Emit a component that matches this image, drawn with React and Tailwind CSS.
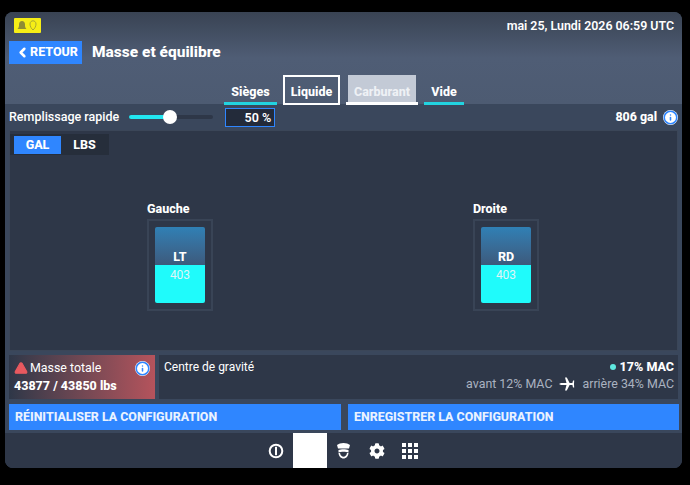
// Mass and balance panel of an aircraft tablet.
import { useState } from "react";
import { ChevronLeft, Info, TriangleAlert } from "lucide-react";
import { FaCog } from "react-icons/fa";

const TABS = [
  { label: "Sièges", box: "w-[53px] border-b-[3px] border-[#22d3e0] pt-[8px] text-white" },
  { label: "Liquide", box: "w-[57px] border-2 border-white pt-[4px] text-white" },
  { label: "Carburant", box: "w-[72px] border-b-[3px] border-white bg-[linear-gradient(to_right,transparent_2px,#c3cad6_2px,#c3cad6_70px,transparent_70px)] pt-[8px] text-[#eef1f5]" },
  { label: "Vide", box: "w-[40px] border-b-[3px] border-[#22d3e0] pt-[8px] text-white" },
];

function InfoDot({ className }) {
  return (
    <span className={`grid h-[15px] w-[15px] place-items-center rounded-full bg-white text-[#2f86ff] ${className || ""}`}>
      <Info size={15} strokeWidth={2.5} />
    </span>
  );
}

function Tank({ title, code }) {
  return (
    <div className="w-[66px]">
      <div className="mb-[2px] text-[12.5px] leading-[16px] font-extrabold text-white">{title}</div>
      <div className="h-[92px] border-2 border-[#394456] p-[6px]">
        <div className="flex h-[76px] flex-col overflow-hidden rounded-[2px] text-center">
          <div className="flex h-[38px] items-end justify-center bg-gradient-to-b from-[#2f80b5] to-[#3c5a7c] text-[12.5px] leading-[17px] font-extrabold text-white">{code}</div>
          <div className="h-[38px] bg-[#1ffbfb] text-[12px] leading-[20px] text-[#dff6f8]">403</div>
        </div>
      </div>
    </div>
  );
}

function BadgeIcons() {
  return (
    <svg width="21" height="11" viewBox="0 0 21 11">
      <path d="M0.5 9 C2 7.5 2 6 2 4.5 C2 2.5 3.2 1 5 1 C6.8 1 8 2.5 8 4.5 C8 6 8 7.5 9.5 9 Z" fill="#8f8d34" />
      <path d="M16 0.8 C17.5 0.8 19 2 19 4 C19 6.5 17.5 8.8 16 10 C14.5 8.8 13 6.5 13 4 C13 2 14.5 0.8 16 0.8 Z" fill="none" stroke="#a9a832" strokeWidth="1" />
    </svg>
  );
}

function Plane() {
  return (
    <svg width="16" height="14" viewBox="0 0 16 14" fill="white">
      <path d="M0 7 L2 6 L7.5 6 L6 0.5 L7.8 0.5 L10.6 6 L13.4 6 L14 3.5 L15.2 3.5 L15 7 L15.2 10.5 L14 10.5 L13.4 8 L10.6 8 L7.8 13.5 L6 13.5 L7.5 8 L2 8 Z" />
    </svg>
  );
}

function AlertCircle() {
  return (
    <svg width="16" height="16" viewBox="0 0 16 16">
      <circle cx="8" cy="8" r="6.3" fill="none" stroke="white" strokeWidth="2" />
      <rect x="7" y="3.8" width="2" height="8.4" fill="white" />
    </svg>
  );
}

function PilotHat() {
  return (
    <svg width="15" height="17" viewBox="0 0 15 17" fill="white">
      <path d="M1 3 C4 0.3 11 0.3 14 3 L13 6.5 L2 6.5 Z" />
      <path d="M2.5 8 C5 7 10 7 12.5 8 L12.5 10.5 C10 9.5 5 9.5 2.5 10.5 Z" />
      <path d="M2.5 11 L4 11 C4.5 13.5 6 14.8 7.5 14.8 C9 14.8 10.5 13.5 11 11 L12.5 11 C12.2 14.3 10 16.5 7.5 16.5 C5 16.5 2.8 14.3 2.5 11 Z" />
    </svg>
  );
}

function AppGrid() {
  const dots = [0, 1, 2, 3, 4, 5, 6, 7, 8];
  return (
    <div className="grid grid-cols-3 gap-[2px]">
      {dots.map((d) => (
        <span key={d} className="h-[4px] w-[4px] bg-white" />
      ))}
    </div>
  );
}

export default function App() {
  const [unit, setUnit] = useState("GAL");

  return (
    <div className="h-[485px] w-[690px] overflow-hidden bg-black pt-[12px] pl-[5px] font-['Roboto',sans-serif]">
      <div className="flex h-[456px] w-[677px] flex-col overflow-hidden rounded-[8px] bg-[#3a475c]">
        <div className="h-[92px] bg-gradient-to-b from-[#394353] via-[#4f5d75] to-[#4d5b72]">
          <div className="flex h-[21px] items-end justify-between pr-[8px] pl-[9px]">
            <div className="flex h-[15px] w-[27px] items-center justify-center rounded-[1px] bg-[#f6ee16]">
              <BadgeIcons />
            </div>
            <span className="text-[12.4px] leading-[15px] font-semibold text-white">mai 25, Lundi 2026 06:59 UTC</span>
          </div>
          <div className="mt-[8px] flex items-center pl-[4px]">
            <button type="button" className="flex h-[23px] w-[73px] items-center justify-center bg-[#2f86ff] pl-[2px] text-[12.5px] font-extrabold text-white">
              <ChevronLeft size={15} strokeWidth={4} />
              RETOUR
            </button>
            <h1 className="ml-[10px] text-[15.5px] font-extrabold text-white">Masse et équilibre</h1>
          </div>
          <div className="mt-[11px] ml-[219px] flex h-[30px] items-end gap-[6px]">
            {TABS.map((t) => (
              <div key={t.label} className={`grid h-[30px] place-items-center text-[12.5px] font-extrabold ${t.box}`}>{t.label}</div>
            ))}
          </div>
        </div>

        <div className="flex h-[26px] items-center pr-[4px] pl-[4px]">
          <span className="text-[12.5px] font-medium text-white">Remplissage rapide</span>
          <div className="relative ml-[10px] h-[4px] w-[84px] rounded-full bg-[#2e3748]">
            <div className="h-full w-[41px] rounded-full bg-[#22e6f0]" />
            <div className="absolute top-[-5px] left-[34px] h-[14px] w-[14px] rounded-full bg-white" />
          </div>
          <div className="ml-[12px] h-[19px] w-[50px] border border-[#2f86ff] bg-[#232b3a] pr-[3px] text-right text-[12.5px] leading-[17px] font-semibold text-white">50 %</div>
          <span className="ml-auto text-[12.4px] font-extrabold text-white">806 gal</span>
          <InfoDot className="ml-[6px]" />
        </div>

        <div className="mx-[4px] h-[221px] border border-[#3b4658] bg-[#2e3748] pt-[3px]">
          <div className="flex h-[21px] w-[99px] items-center bg-[#262e3b] pl-[4px]">
            {["GAL", "LBS"].map((u) => (
              <button key={u} type="button" onClick={() => setUnit(u)} className={`h-[18px] w-[47px] text-center text-[12.5px] font-extrabold text-white ${unit === u ? "bg-[#2f86ff]" : ""}`}>{u}</button>
            ))}
          </div>
          <div className="mt-[46px] flex gap-[260px] pl-[137px]">
            <Tank title="Gauche" code="LT" />
            <Tank title="Droite" code="RD" />
          </div>
        </div>

        <div className="mx-[4px] mt-[4px] flex h-[44px] gap-[4px]">
          <div className="relative h-full w-[146px] bg-gradient-to-r from-[#2e3748] to-[#b5535c] pt-[5px] pl-[5px] text-white">
            <div className="flex items-center gap-[2px] text-[12.4px] leading-[16px]">
              <TriangleAlert size={14} fill="#e8595f" stroke="#e8595f" />
              Masse totale
            </div>
            <div className="mt-[2px] text-[12.5px] leading-[16px] font-extrabold">43877 / 43850 lbs</div>
            <InfoDot className="absolute top-[6px] right-[5px]" />
          </div>
          <div className="flex flex-1 justify-between bg-[#2e3748] pt-[4px] pr-[4px] pl-[5px]">
            <span className="text-[12px] leading-[16px] text-white">Centre de gravité</span>
            <div className="text-right">
              <div className="flex items-center justify-end gap-[4px] text-[12.5px] leading-[16px] font-extrabold text-white">
                <span className="h-[6px] w-[6px] rounded-full bg-[#5fe8e0]" />
                17% MAC
              </div>
              <div className="mt-[1px] flex items-center gap-[7px] text-[12.4px] leading-[16px] text-[#aab2c0]">
                <span>avant 12% MAC</span>
                <Plane />
                <span>arrière 34% MAC</span>
              </div>
            </div>
          </div>
        </div>

        <div className="mt-[5px] ml-[4px] flex h-[26px] gap-[7px]">
          <button type="button" className="w-[332px] bg-[#2f86ff] pl-[6px] text-left text-[12.4px] font-extrabold text-[#e9f2ff]">RÉINITIALISER LA CONFIGURATION</button>
          <button type="button" className="w-[331px] bg-[#2f86ff] pl-[6px] text-left text-[12.4px] font-extrabold text-[#e9f2ff]">ENREGISTRER LA CONFIGURATION</button>
        </div>

        <div className="mt-[3px] flex h-[35px] items-center bg-[#2e3748] pl-[263px]">
          <AlertCircle />
          <div className="mr-[9px] ml-[9px] h-[35px] w-[34px] bg-white" />
          <PilotHat />
          <FaCog size={16} className="ml-[18px] text-white" />
          <div className="ml-[17px]"><AppGrid /></div>
        </div>
      </div>
    </div>
  );
}
